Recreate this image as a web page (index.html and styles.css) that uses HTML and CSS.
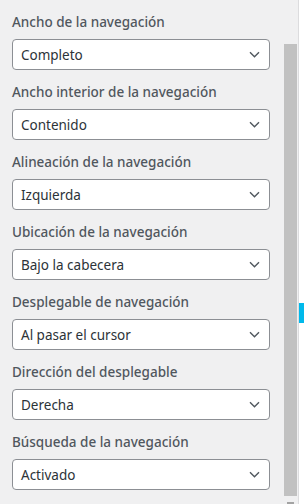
FILE: index.html
```html
<!DOCTYPE html>
<html lang="es">
<head>
    <meta charset="UTF-8">
    <meta name="viewport" content="width=device-width, initial-scale=1.0">
    <title>Navegación</title>
    <link rel="stylesheet" href="styles.css">
</head>
<body>
    <div class="panel">
        <div class="controls">
            <div class="field">
                <label class="field-label">Ancho de la navegación</label>
                <div class="select"><span>Completo</span><svg class="chevron" width="11" height="7" viewBox="0 0 11 7"><path d="M1 1.2l4.5 4.5 4.5-4.5" fill="none" stroke="#50575e" stroke-width="1.4"/></svg></div>
            </div>
            <div class="field">
                <label class="field-label">Ancho interior de la navegación</label>
                <div class="select"><span>Contenido</span><svg class="chevron" width="11" height="7" viewBox="0 0 11 7"><path d="M1 1.2l4.5 4.5 4.5-4.5" fill="none" stroke="#50575e" stroke-width="1.4"/></svg></div>
            </div>
            <div class="field">
                <label class="field-label">Alineación de la navegación</label>
                <div class="select"><span>Izquierda</span><svg class="chevron" width="11" height="7" viewBox="0 0 11 7"><path d="M1 1.2l4.5 4.5 4.5-4.5" fill="none" stroke="#50575e" stroke-width="1.4"/></svg></div>
            </div>
            <div class="field">
                <label class="field-label">Ubicación de la navegación</label>
                <div class="select"><span>Bajo la cabecera</span><svg class="chevron" width="11" height="7" viewBox="0 0 11 7"><path d="M1 1.2l4.5 4.5 4.5-4.5" fill="none" stroke="#50575e" stroke-width="1.4"/></svg></div>
            </div>
            <div class="field">
                <label class="field-label">Desplegable de navegación</label>
                <div class="select"><span>Al pasar el cursor</span><svg class="chevron" width="11" height="7" viewBox="0 0 11 7"><path d="M1 1.2l4.5 4.5 4.5-4.5" fill="none" stroke="#50575e" stroke-width="1.4"/></svg></div>
            </div>
            <div class="field">
                <label class="field-label">Dirección del desplegable</label>
                <div class="select"><span>Derecha</span><svg class="chevron" width="11" height="7" viewBox="0 0 11 7"><path d="M1 1.2l4.5 4.5 4.5-4.5" fill="none" stroke="#50575e" stroke-width="1.4"/></svg></div>
            </div>
            <div class="field">
                <label class="field-label">Búsqueda de la navegación</label>
                <div class="select"><span>Activado</span><svg class="chevron" width="11" height="7" viewBox="0 0 11 7"><path d="M1 1.2l4.5 4.5 4.5-4.5" fill="none" stroke="#50575e" stroke-width="1.4"/></svg></div>
            </div>
        </div>

        <!-- fake scrollbar -->
        <div class="scrollbar">
            <div class="thumb"></div>
            <div class="arrow"></div>
        </div>

        <div class="edge">
            <div class="marker"></div>
        </div>
    </div>
</body>
</html>
```
FILE: styles.css
```css
body {
    margin: 0;
    font-family: "Noto Sans", "Open Sans", sans-serif;
    background-color: #f0f0f1;
    color: #2c3338;
}

.panel {
    display: flex;
    height: 504px;
    overflow: hidden;
}

.controls {
    width: 271px;
    padding-left: 12px;
}

.field {
    padding-top: 12px;
    height: 58px;
}

.field-label {
    display: block;
    font-size: 13.5px;
    font-weight: 500;
    line-height: 20px;
    color: #50575e;
    margin-bottom: 7px;
    white-space: nowrap;
}

.select {
    box-sizing: border-box;
    width: 258px;
    height: 31px;
    background-color: white;
    border: 1px solid #8c8f94;
    border-radius: 4px;
    display: flex;
    align-items: center;
    justify-content: space-between;
    padding: 0 9px 0 8px;
    font-size: 13.5px;
}

.chevron {
    display: block;
}

.scrollbar {
    width: 14px;
    padding-top: 44px;
    display: flex;
    flex-direction: column;
    align-items: center;
}

.thumb {
    width: 13px;
    height: 452px;
    background-color: #c1c1c1;
}

.arrow {
    margin-top: 6px;
    width: 7px;
    height: 2px;
    background-color: #a3a3a3;
}

.edge {
    flex: 1;
    margin-left: 1px;
    border-left: 1px solid #dcdcde;
    background-color: white;
    padding-top: 303px;
}

.marker {
    height: 20px;
    background-color: #00b9eb;
}
```
